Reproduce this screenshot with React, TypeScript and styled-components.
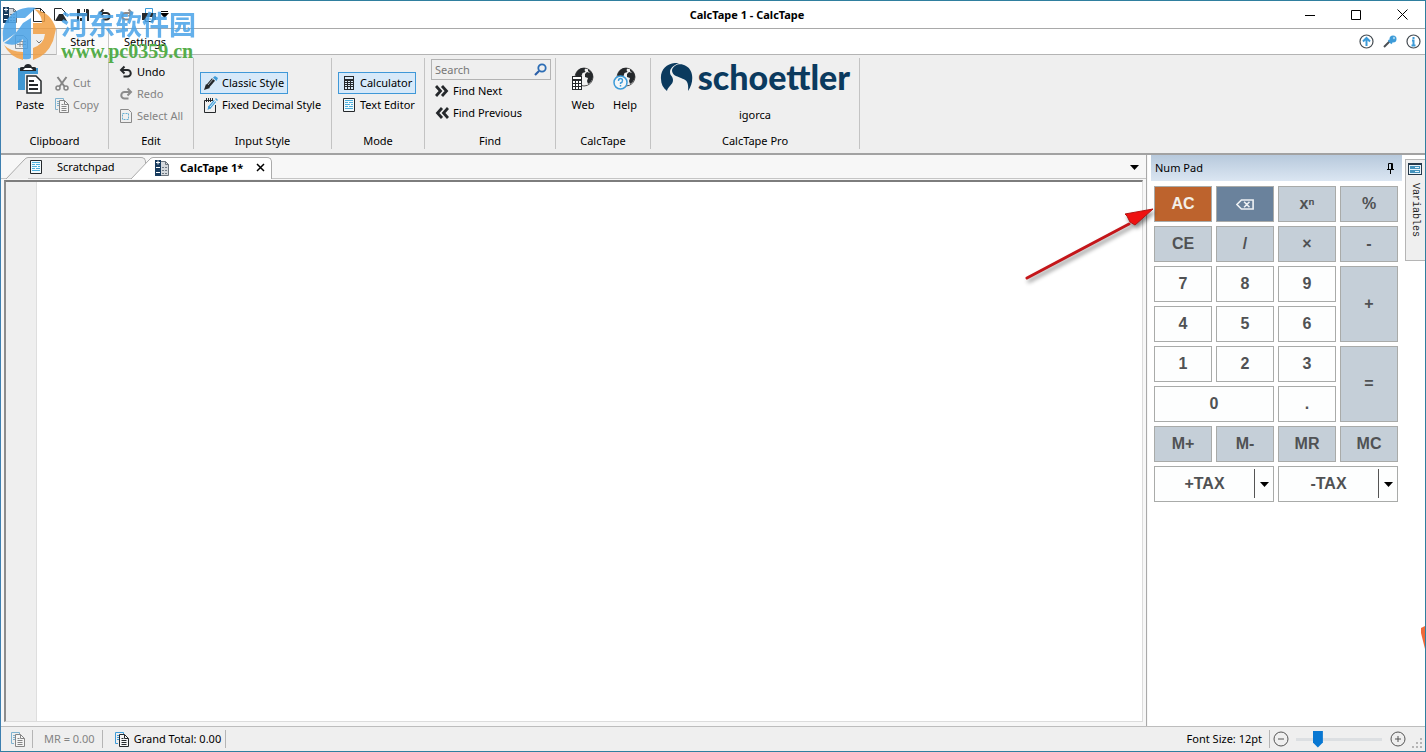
import React, { useState } from "react";
import styled, { createGlobalStyle, css } from "styled-components";

const GlobalStyle = createGlobalStyle`
  * { box-sizing: border-box; }
  body { margin: 0; background: #fff; }
  body, button, input, textarea {
    font-family: "Noto Sans", "Noto Sans CJK SC", sans-serif;
    font-size: 12px;
    line-height: 16px;
    color: #000;
  }
  button { margin: 0; padding: 0; border: 0; background: none; white-space: nowrap; }
  svg { display: block; flex: none; }
`;

const Window = styled.div`
  position: relative;
  display: flex;
  flex-direction: column;
  min-height: 100vh;
  border: 1px solid #2f7f9f;
  border-left-color: #3d7fb0;
  overflow: hidden;
`;

const TitleBar = styled.header`
  display: flex;
  align-items: center;
  justify-content: space-between;
  height: 28px;
  border-bottom: 1px solid #a9a9a9;
`;
const TitleSide = styled.div<{ $end?: boolean }>`
  flex: 1;
  display: flex;
  align-items: center;
  justify-content: ${(p) => (p.$end ? "flex-end" : "flex-start")};
`;
const Title = styled.h1`
  margin: 0;
  padding-left: 68px;
  font-size: 11px;
  line-height: 16px;
  font-weight: 700;
`;
const QuickButton = styled.button`
  display: flex;
  justify-content: center;
  width: 22px;
`;
const AppMark = styled.span`
  width: 27px;
  padding-left: 2px;
`;
const CaptionButton = styled.button`
  display: flex;
  align-items: center;
  justify-content: center;
  width: 46px;
  height: 26px;
`;

const MenuRow = styled.nav`
  display: flex;
  align-items: stretch;
  height: 26px;
  border-bottom: 1px solid #b4b4b4;
`;
const FileButton = styled.button`
  display: flex;
  align-items: center;
  justify-content: center;
  gap: 8px;
  width: 55px;
  background: #efefef;
`;
const MenuTab = styled.button<{ $active?: boolean }>`
  font-size: 11px;
  width: ${(p) => (p.$active ? 53 : 72)}px;
  ${(p) =>
    p.$active &&
    css`
      border: 1px solid #c8c8c8;
      border-width: 0 1px;
      background: #fbfbfb;
      margin-bottom: -1px;
    `}
`;
const MenuTools = styled.div`
  display: flex;
  align-items: center;
  gap: 8px;
  margin-left: auto;
  padding-right: 4px;
`;

const Ribbon = styled.section`
  display: flex;
  height: 100px;
  padding: 3px 0 4px;
  background: #efefef;
  border-bottom: 2px solid #a2a2a2;
`;
const Group = styled.section<{ $w: number }>`
  display: flex;
  flex-direction: column;
  width: ${(p) => p.$w}px;
  border-right: 1px solid #c3c3c3;
`;
const GroupBody = styled.div<{ $pad?: number }>`
  flex: 1;
  display: flex;
  padding: 0 ${(p) => p.$pad ?? 6}px;
`;
const GroupLabel = styled.h2`
  margin: 0;
  font-size: 11px;
  line-height: 16px;
  font-weight: 400;
  text-align: center;
`;
const Stack = styled.div<{ $top: number }>`
  display: flex;
  flex-direction: column;
  align-items: flex-start;
  padding-top: ${(p) => p.$top}px;
`;
const Tool = styled.button<{ $muted?: boolean; $on?: boolean }>`
  display: flex;
  align-items: center;
  gap: 4px;
  height: 22px;
  padding: 0 3px;
  border: 1px solid ${(p) => (p.$on ? "#3f98d8" : "transparent")};
  background: ${(p) => (p.$on ? "#d7e9f9" : "none")};
  color: ${(p) => (p.$muted ? "#838383" : "#000")};
  font-size: 11px;
  > svg { min-width: 14px; }
`;
const BigToolButton = styled.button`
  flex: none;
  display: flex;
  flex-direction: column;
  align-items: center;
  gap: 2px;
  width: 42px;
  padding-top: 5px;
  font-size: 11px;
`;
const BigIcon = styled.span`
  display: flex;
  align-items: center;
  height: 32px;
`;
const SearchBox = styled.label`
  display: flex;
  align-items: center;
  width: 120px;
  height: 21px;
  padding: 0 3px;
  border: 1px solid #b3b3b3;
`;
const SearchInput = styled.input`
  flex: 1;
  min-width: 0;
  padding: 0;
  border: 0;
  outline: 0;
  background: none;
  font-size: 11px;
  &::placeholder { color: #777; opacity: 1; }
`;
const Brand = styled.div`
  flex: 1;
  display: flex;
  flex-direction: column;
  align-items: center;
  gap: 11px;
  font-size: 11px;
`;
const Logo = styled.div`
  display: flex;
  align-items: center;
  gap: 5px;
  height: 38px;
  color: #0b3a5e;
  font: 900 34px/38px Lato, sans-serif;
`;

const Main = styled.main`
  flex: 1;
  display: flex;
  background: #f7f7f7;
`;
const Documents = styled.section`
  flex: 1;
  min-width: 0;
  display: flex;
  flex-direction: column;
  border-right: 1px solid #a9a9a9;
`;
const TabStrip = styled.div`
  display: flex;
  align-items: flex-end;
  height: 24px;
  padding-left: 5px;
  border-bottom: 1px solid #c5c5c5;
`;
const DocTab = styled.div<{ $active?: boolean }>`
  display: flex;
  height: 21px;
  ${(p) =>
    p.$active
      ? css`
          height: 22px;
          margin: 0 0 -1px -15px;
          z-index: 1;
        `
      : ""}
`;
const DocTabBody = styled.div<{ $active?: boolean }>`
  display: flex;
  align-items: center;
  width: ${(p) => (p.$active ? 119 : 118)}px;
  padding: 0 0 2px 2px;
  border: 1px solid #ababab;
  border-width: 1px 1px 0 0;
  border-radius: 0 5px 0 0;
  background: ${(p) => (p.$active ? "#fff" : "#efefef")};
`;
const DocTabLabel = styled.button<{ $active?: boolean }>`
  display: flex;
  align-items: center;
  gap: ${(p) => (p.$active ? 11 : 15)}px;
  font-size: 11px;
  font-weight: ${(p) => (p.$active ? 700 : 400)};
`;
const CloseTab = styled.button`
  margin-left: auto;
  margin-right: 6px;
`;
const TabMenu = styled.button`
  margin: 0 7px 7px auto;
`;
const Sheet = styled.div`
  flex: 1;
  display: flex;
  margin: 1px 3px 4px;
  border: 1px solid #dcdcdc;
  border-top: 2px solid #7d7d7d;
  border-left: 2px solid #8d8d8d;
  background: #fff;
`;
const Gutter = styled.div`
  width: 31px;
  background: #efefef;
  border-right: 1px solid #dedede;
`;
const Tape = styled.textarea`
  flex: 1;
  border: 0;
  outline: 0;
  resize: none;
  background: #fff;
`;

const Side = styled.aside`
  display: flex;
  margin-left: 1px;
  background: #fff;
`;
const NumPad = styled.section`
  width: 257px;
  padding: 0 3px;
`;
const PadHeader = styled.header`
  display: flex;
  align-items: center;
  justify-content: space-between;
  height: 26px;
  padding: 0 7px 0 4px;
  background: linear-gradient(#b7c9dc, #dbe6f2);
`;
const PadTitle = styled.h2`
  margin: 0;
  font-size: 11px;
  font-weight: 400;
`;
const Keys = styled.div`
  display: grid;
  grid-template-columns: repeat(4, 58px);
  grid-auto-rows: 36px;
  gap: 4px;
  padding: 5px 3px;
`;
type Tone = "light" | "grey" | "orange" | "blue";
const tones: Record<Tone, string> = {
  light: "#fdfefe",
  grey: "#c5cfd8",
  orange: "#bd632d",
  blue: "#6a829c",
};
const Key = styled.button<{ $tone: Tone; $cols?: number; $rows?: number }>`
  display: flex;
  align-items: center;
  justify-content: center;
  grid-column: span ${(p) => p.$cols ?? 1};
  grid-row: span ${(p) => p.$rows ?? 1};
  border: 1px solid #a9aba9;
  background: ${(p) => tones[p.$tone]};
  color: ${(p) => (p.$tone === "orange" || p.$tone === "blue" ? "#f3efe9" : "#505254")};
  font: 700 16px/20px "Liberation Sans", Arial, sans-serif;
`;
const SplitKey = styled.div`
  display: flex;
  grid-column: span 2;
  border: 1px solid #a9aba9;
  background: #fdfefe;
`;
const SplitMain = styled.button`
  flex: 1;
  color: #505254;
  font: 700 16px/20px "Liberation Sans", Arial, sans-serif;
`;
const SplitArrow = styled.button`
  display: flex;
  align-items: center;
  justify-content: center;
  width: 19px;
  margin: 2px 0 3px;
  border-left: 1px solid #555;
`;
const SideTab = styled.button`
  align-self: flex-start;
  display: flex;
  flex-direction: column;
  align-items: center;
  gap: 8px;
  width: 20px;
  height: 102px;
  margin-top: 4px;
  padding: 3px 2px 0 0;
  border: 1px solid #b5b5b5;
  border-right: 0;
  background: #efefef;
`;
const SideTabText = styled.span`
  writing-mode: vertical-rl;
  font: 10px/12px "Liberation Mono", monospace;
  color: #222;
`;

const StatusBar = styled.footer`
  display: flex;
  align-items: center;
  height: 25px;
  padding: 0 3px 0 10px;
  border-top: 1px solid #bdbdbd;
  background: #efefef;
  font-size: 11px;
`;
const StatusItem = styled.span<{ $muted?: boolean; $left?: number; $right?: number }>`
  display: flex;
  align-items: center;
  gap: 5px;
  height: 18px;
  padding: 0 ${(p) => p.$right ?? 7}px 0 ${(p) => p.$left ?? 0}px;
  border-right: 1px solid #b5b5b5;
  color: ${(p) => (p.$muted ? "#838383" : "#000")};
`;
const FontTools = styled.div`
  display: flex;
  align-items: center;
  gap: 3px;
  margin-left: auto;
`;
const Range = styled.input`
  appearance: none;
  width: 86px;
  height: 18px;
  margin: 0 5px 0 4px;
  background: linear-gradient(#dcdfe2, #dcdfe2) center / 100% 3px no-repeat;
  &::-webkit-slider-thumb {
    appearance: none;
    width: 10px;
    height: 17px;
    border: 0;
    background: #0877d2;
    clip-path: polygon(0 0, 100% 0, 100% 70%, 50% 100%, 0 70%);
  }
`;
const Grip = styled.svg`
  align-self: flex-end;
  margin-left: 3px;
`;

const Watermark = styled.div`
  position: absolute;
  top: 2px;
  left: 0;
  display: flex;
  gap: 3px;
  pointer-events: none;
`;
const MarkText = styled.div`
  padding-top: 4px;
  font: 700 27px/34px "Noto Sans CJK SC", sans-serif;
  color: #4aa3e8;
  opacity: 0.85;
`;
const MarkUrl = styled.div`
  font: 700 20px/20px "Liberation Serif", serif;
  color: #55ad4b;
`;
const Pointer = styled.svg`
  position: absolute;
  top: 200px;
  right: 272px;
  filter: drop-shadow(2px 3px 2px #0007);
`;
const EdgeBadge = styled.svg`
  position: absolute;
  top: 624px;
  right: 0;
`;

const ink = "#25282b";
const blue = "#3d9bd8";

const PageIcon = () => (
  <svg width="14" height="16" viewBox="0 0 14 16" fill="#fff" stroke={ink}>
    <path d="M1.5 1.5h7l4 4v9h-11zM8.5 1.5v4h4" />
  </svg>
);
const OpenIcon = () => (
  <svg width="16" height="16" viewBox="0 0 16 16">
    <path d="M1.500 13.500v-12h7l4 4v3" fill="none" stroke={ink} />
    <path d="M2 14 6 7h4l4 7z" fill={ink} />
  </svg>
);
const SaveIcon = () => (
  <svg width="14" height="14" viewBox="0 0 14 14">
    <path d="M1 1h11l1 1v11H1z" fill={ink} />
    <path d="M4 1h6v4H4zM3 8h8v5H3z" fill="#fff" />
    <path d="M8 1h1v3H8zM4 10h2v3H4z" fill={ink} />
  </svg>
);
const TurnIcon = ({ flip, muted }: { flip?: boolean; muted?: boolean }) => (
  <svg width="14" height="14" viewBox="0 0 14 14">
    <path
      d="M5.500 1.500 2 5l3.500 3.500M2 5h6.500a3.200 3.200 0 0 1 0 6.500H4.500"
      transform={flip ? "translate(14 0) scale(-1 1)" : undefined}
      fill="none"
      stroke={muted ? "#8c8c8c" : ink}
      strokeWidth="2"
    />
  </svg>
);
const PrintIcon = () => (
  <svg width="16" height="16" viewBox="0 0 16 16">
    <path d="M4.500 6V1.500h7V6" fill="#fff" stroke={blue} />
    <path d="M1 6h14v7H1z" fill={ink} />
    <path d="M4.500 9.500h7v5h-7z" fill="#fff" stroke={ink} />
    <path d="M6 12h4" stroke={blue} />
  </svg>
);
const Caret = ({ bar }: { bar?: boolean }) => (
  <svg width="9" height="8" viewBox="0 0 9 8">
    {bar && <path d="M1 0h7v1H1z" />}
    <path d="M0 2h9L4.500 7z" />
  </svg>
);
const TapeIcon = () => (
  <svg width="14" height="16" viewBox="0 0 14 16">
    <path d="M5.500 1.500h5l3 3v11h-8z" fill="#d5d9dd" stroke="#6b747d" />
    <path d="M10.500 1.500v3h3" fill="none" stroke="#6b747d" />
    <path d="M7 7.500h5M7 10.500h5M7 13.500h5" stroke="#707a84" strokeDasharray="2 1" />
    <path d="M0 0h6v16H0z" fill="#173b5e" />
    <path d="M1 2.500h4M3 .5v4M1 7.500h4M1 12.500h4" stroke="#fff" />
  </svg>
);
const TableIcon = () => (
  <svg width="13" height="14" viewBox="0 0 13 14" fill="none" stroke="#8b9298">
    <path d="M.5.5h8l4 4v9H.5zM2 6.500h9M2 9.500h9M5 4v8M8 6v6" />
  </svg>
);
const ClipboardIcon = () => (
  <svg width="26" height="32" viewBox="0 0 26 32">
    <path d="M1 5h20v22H1z" fill="#4298d2" />
    <path d="M3 8V5q0-1 2-1h2q1-3 4-3t4 3h2q2 0 2 1v3z" fill={ink} />
    <path d="M8 5h6l2 2H6z" fill="#fff" />
    <path d="M8 11h17v20H8z" fill="#efefef" />
    <path d="M10 13h9l5 5v12H10z" fill="#fff" stroke={ink} strokeWidth="1.500" />
    <path d="M12 18h5M12 22h9M12 26h9" stroke={ink} strokeWidth="2" />
  </svg>
);
const CutIcon = () => (
  <svg width="14" height="15" viewBox="0 0 14 15" fill="none" stroke="#858585" strokeWidth="1.500">
    <path d="M2.500 1 9.500 10.500M11.500 1l-7 9.500" strokeWidth="2" />
    <circle cx="3" cy="12" r="2" />
    <circle cx="11" cy="12" r="2" />
  </svg>
);
const CopyIcon = ({ muted }: { muted?: boolean }) => (
  <svg width="14" height="15" viewBox="0 0 14 15" fill="none" stroke={muted ? "#858585" : ink}>
    <path d="M3 11.500H.5V.5h8V2M2 3.500h2M2 5.500h2M2 7.500h2" stroke={muted ? "#7fb2cf" : blue} />
    <path d="M4.500 2.500h5l4 4v8h-9z" fill="#f5f5f5" />
    <path d="M9.500 2.500v4h4M6.500 6.500h2M6.500 8.500h5M6.500 10.500h5M6.500 12.500h5" />
  </svg>
);
const SelectIcon = () => (
  <svg width="12" height="14" viewBox="0 0 12 14" fill="none">
    <path d="M.5.5h8l3 3v10H.5z" stroke="#8a8a8a" />
    <path d="M2.500 4.500h6v6h-6z" stroke="#65aed2" strokeDasharray="2 1" />
  </svg>
);
const PencilIcon = () => (
  <svg width="14" height="14" viewBox="0 0 14 14">
    <path d="m3.500 10.500 6-7" stroke={ink} strokeWidth="4" />
    <path d="m0 14 2-6 4 4z" fill={ink} />
    <path d="m4 9 5-6" stroke="#a8b0b6" />
    <path d="m9 1.500 2-1.500 3 2-1.500 3z" fill={blue} />
  </svg>
);
const NoteIcon = () => (
  <svg width="14" height="15" viewBox="0 0 14 15" fill="none">
    <path d="M9 2.500H.5v12h11V7" stroke={ink} />
    <path d="M2.500 0v4M4.500 0v4M6.500 0v4M8.500 0v3" stroke={ink} />
    <path d="m5 10 6-7" stroke={blue} strokeWidth="3" />
    <path d="m3.500 12 1-4 2.500 2zM11 1l1-1 2 2-1 1z" fill={blue} />
    <path d="m6 9 5-6" stroke="#d9edf8" />
  </svg>
);
const CalcIcon = () => (
  <svg width="12" height="14" viewBox="0 0 12 14">
    <path d="M1 0h10v14H1z" fill={ink} />
    <path
      d="M2 1h8v2H2zM2 5h2v1H2zM5 5h2v1H5zM8 5h2v1H8zM2 7h2v1H2zM5 7h2v1H5zM8 7h2v1H8zM2 9h2v1H2zM5 9h2v1H5zM8 9h2v1H8zM2 11h2v2H2zM5 11h2v2H5zM8 11h2v2H8z"
      fill="#dcebf8"
    />
  </svg>
);
const TextIcon = () => (
  <svg width="12" height="14" viewBox="0 0 12 14">
    <path d="M.5.5h11v13H.5z" fill="#f2fafd" stroke={ink} />
    <path d="M2 2.500h8M2 4.500h3m1 0h4M2 6.500h5m1 0h2M2 8.500h3m1 0h4M2 10.500h8" stroke="#4fb0dc" />
  </svg>
);
const SearchIcon = () => (
  <svg width="13" height="13" viewBox="0 0 13 13" fill="none">
    <circle cx="8" cy="5" r="3.700" stroke="#2c6db5" strokeWidth="1.800" />
    <path d="M5 8 1 12" stroke="#2c5fa8" strokeWidth="2.200" />
  </svg>
);
const ChevronsIcon = ({ flip }: { flip?: boolean }) => (
  <svg width="14" height="12" viewBox="0 0 14 12">
    <path
      d="m1 1 4.500 5L1 11M7 1l4.500 5L7 11"
      transform={flip ? "translate(14 0) scale(-1 1)" : undefined}
      fill="none"
      stroke={ink}
      strokeWidth="2.800"
    />
  </svg>
);
const GlobeIcon = ({ help }: { help?: boolean }) => (
  <svg width="24" height="24" viewBox="0 0 24 24">
    <circle cx="13" cy="10" r="9" fill="#f1f1f1" stroke="#555" />
    <path d="M4.500 8q1-5 6-7l4 0-1 2 1 2-3 1-1 3-2 1-1 3-2-2z" fill={ink} />
    <path d="M17 2q5 3 5 8-1 5-5 7l-1-3 1-3-3-1 0-3 2-2 3 1-2-2z" fill={ink} />
    {help ? (
      <g>
        <circle cx="7.500" cy="15.500" r="6.500" fill="#f3f6f8" stroke={blue} strokeWidth="1.500" />
        <path d="M5.500 14q0-2.500 2-2.500t2 2-2 2.500v1M7.500 18v1.500" fill="none" stroke={blue} strokeWidth="1.400" />
      </g>
    ) : (
      <g>
        <path d="M1 9h10v14H1z" fill={ink} />
        <path
          d="M2 10h8v2H2zM2 14h2v2H2zM5 14h2v2H5zM8 14h2v2H8zM2 17h2v2H2zM5 17h2v2H5zM8 17h2v2H8zM2 20h2v2H2zM5 20h2v2H5zM8 20h2v2H8z"
          fill="#fff"
        />
      </g>
    )}
  </svg>
);
const SchoettlerMark = () => (
  <svg width="33" height="29" viewBox="0 0 33 29" fill="#0b3a5e">
    <path d="M19 0C8-1 0 6 1 16c0 5 2 9 6 12 1-5 6-6 6-11 0-4-3-4-3-8 0-4 4-7 9-9z" />
    <path d="M12 7c2-6 9-7 14-4 8 4 8 17 2 25 1-10-2-11-7-13-5-2-9-3-9-8z" />
  </svg>
);
const PinIcon = () => (
  <svg width="9" height="11" viewBox="0 0 9 11" fill="none" stroke="#000">
    <path d="M2.500 6V.5h4V6M1 6.500h7M4.500 7v4M5.500 1v5" />
  </svg>
);
const BackspaceIcon = () => (
  <svg width="18" height="11" viewBox="0 0 20 12" fill="none" stroke="#eef1f4" strokeWidth="1.800">
    <path d="M6 1h13v10H6L1 6zM9 3l6 6M15 3 9 9" />
  </svg>
);
const PanelIcon = () => (
  <svg width="14" height="12" viewBox="0 0 14 12">
    <path d="M0 0h14v12H0z" fill="#26394a" />
    <path d="M1 2h12v9H1z" fill="#e8f4fb" />
    <path d="M2 4.500h10M2 8.500h10" stroke="#4593bd" strokeWidth="3" />
    <path d="M7 4.500h4M7 8.500h4" stroke="#e8f4fb" />
  </svg>
);
const RoundIcon = ({ kind }: { kind: "up" | "info" }) => (
  <svg width="15" height="15" viewBox="0 0 15 15" fill="none">
    <circle cx="7.500" cy="7.500" r="6.500" stroke="#454c52" strokeWidth="1.200" />
    <path
      d={kind === "up" ? "M7.500 12V4M4 7.500 7.500 4 11 7.500" : "M7.500 3v2M6 6.500h1.500V11M5.500 11.500h4"}
      stroke={blue}
      strokeWidth="2"
    />
  </svg>
);
const BigPinIcon = () => (
  <svg width="16" height="15" viewBox="0 0 16 15">
    <path d="m2 13 6-6" stroke="#4a4f54" strokeWidth="2" />
    <path d="M6.500 6l3.500 3.500" stroke={blue} strokeWidth="2" />
    <circle cx="11" cy="5" r="3.500" fill={blue} />
    <circle cx="12" cy="4" r="1.200" fill="#9ed0ee" />
  </svg>
);
const SignIcon = ({ plus }: { plus?: boolean }) => (
  <svg width="16" height="16" viewBox="0 0 16 16" fill="none" stroke="#555">
    <circle cx="8" cy="8" r="7" />
    <path d={plus ? "M5 8h6M8 5v6" : "M5 8h6"} />
  </svg>
);
const TabSlope = ({ fill }: { fill: string }) => (
  <svg width="22" height="22" viewBox="0 0 22 22">
    <path d="M0 22 18 3q2-2.500 4-2.500V22z" fill={fill} />
    <path d="M0 22 18 3q2-2.500 4-2.500" fill="none" stroke="#ababab" />
  </svg>
);

const BigTool = ({ icon, children }: { icon: React.ReactNode; children: React.ReactNode }) => (
  <BigToolButton>
    <BigIcon>{icon}</BigIcon>
    {children}
  </BigToolButton>
);

const keys: { label: string; name?: string; tone?: Tone; cols?: number; rows?: number }[] = [
  { label: "AC", tone: "orange" },
  { label: "", name: "Backspace", tone: "blue" },
  { label: "xⁿ", tone: "grey" },
  { label: "%", tone: "grey" },
  { label: "CE", tone: "grey" },
  { label: "/", tone: "grey" },
  { label: "×", tone: "grey" },
  { label: "-", tone: "grey" },
  { label: "7" },
  { label: "8" },
  { label: "9" },
  { label: "+", tone: "grey", rows: 2 },
  { label: "4" },
  { label: "5" },
  { label: "6" },
  { label: "1" },
  { label: "2" },
  { label: "3" },
  { label: "=", tone: "grey", rows: 2 },
  { label: "0", cols: 2 },
  { label: "." },
  { label: "M+", tone: "grey" },
  { label: "M-", tone: "grey" },
  { label: "MR", tone: "grey" },
  { label: "MC", tone: "grey" },
];

export default function App() {
  const [size, setSize] = useState(12);
  return (
    <>
      <GlobalStyle />
      <Window>
        <TitleBar>
          <TitleSide>
            <AppMark><TapeIcon /></AppMark>
            <QuickButton aria-label="New"><PageIcon /></QuickButton>
            <QuickButton aria-label="Open"><OpenIcon /></QuickButton>
            <QuickButton aria-label="Save"><SaveIcon /></QuickButton>
            <QuickButton aria-label="Undo last"><TurnIcon /></QuickButton>
            <QuickButton aria-label="Redo last"><TurnIcon flip muted /></QuickButton>
            <QuickButton aria-label="Print"><PrintIcon /></QuickButton>
            <button aria-label="Customize toolbar"><Caret bar /></button>
          </TitleSide>
          <Title>CalcTape 1 - CalcTape</Title>
          <TitleSide $end>
            <CaptionButton aria-label="Minimize">
              <svg width="10" height="10"><path d="M0 5.500h10" stroke="#000" /></svg>
            </CaptionButton>
            <CaptionButton aria-label="Maximize">
              <svg width="10" height="10"><path d="M.5.5h9v9h-9z" fill="none" stroke="#000" /></svg>
            </CaptionButton>
            <CaptionButton aria-label="Close">
              <svg width="11" height="11"><path d="m.5.5 10 10m0-10-10 10" stroke="#000" /></svg>
            </CaptionButton>
          </TitleSide>
        </TitleBar>

        <MenuRow>
          <FileButton aria-label="File">
            <TableIcon />
            <svg width="6" height="4"><path d="m.5.5 2.500 2.500L5.500.5" fill="none" stroke="#777" /></svg>
          </FileButton>
          <MenuTab $active>Start</MenuTab>
          <MenuTab>Settings</MenuTab>
          <MenuTools>
            <button aria-label="Collapse ribbon"><RoundIcon kind="up" /></button>
            <button aria-label="Pin window"><BigPinIcon /></button>
            <button aria-label="About"><RoundIcon kind="info" /></button>
          </MenuTools>
        </MenuRow>

        <Ribbon>
          <Group $w={108}>
            <GroupBody $pad={8}>
              <BigTool icon={<ClipboardIcon />}>Paste</BigTool>
              <Stack $top={14}>
                <Tool $muted><CutIcon />Cut</Tool>
                <Tool $muted><CopyIcon muted />Copy</Tool>
              </Stack>
            </GroupBody>
            <GroupLabel>Clipboard</GroupLabel>
          </Group>
          <Group $w={85}>
            <GroupBody>
              <Stack $top={3}>
                <Tool><TurnIcon />Undo</Tool>
                <Tool $muted><TurnIcon flip muted />Redo</Tool>
                <Tool $muted><SelectIcon />Select All</Tool>
              </Stack>
            </GroupBody>
            <GroupLabel>Edit</GroupLabel>
          </Group>
          <Group $w={138}>
            <GroupBody>
              <Stack $top={14}>
                <Tool $on><PencilIcon />Classic Style</Tool>
                <Tool><NoteIcon />Fixed Decimal Style</Tool>
              </Stack>
            </GroupBody>
            <GroupLabel>Input Style</GroupLabel>
          </Group>
          <Group $w={93}>
            <GroupBody>
              <Stack $top={14}>
                <Tool $on><CalcIcon />Calculator</Tool>
                <Tool><TextIcon />Text Editor</Tool>
              </Stack>
            </GroupBody>
            <GroupLabel>Mode</GroupLabel>
          </Group>
          <Group $w={131}>
            <GroupBody>
              <Stack $top={1}>
                <SearchBox>
                  <SearchInput aria-label="Search" placeholder="Search" />
                  <SearchIcon />
                </SearchBox>
                <Tool><ChevronsIcon />Find Next</Tool>
                <Tool><ChevronsIcon flip />Find Previous</Tool>
              </Stack>
            </GroupBody>
            <GroupLabel>Find</GroupLabel>
          </Group>
          <Group $w={95}>
            <GroupBody>
              <BigTool icon={<GlobeIcon />}>Web</BigTool>
              <BigTool icon={<GlobeIcon help />}>Help</BigTool>
            </GroupBody>
            <GroupLabel>CalcTape</GroupLabel>
          </Group>
          <Group $w={209}>
            <GroupBody>
              <Brand>
                <Logo><SchoettlerMark />schoettler</Logo>
                igorca
              </Brand>
            </GroupBody>
            <GroupLabel>CalcTape Pro</GroupLabel>
          </Group>
        </Ribbon>

        <Main>
          <Documents>
            <TabStrip>
              <DocTab>
                <TabSlope fill="#efefef" />
                <DocTabBody>
                  <DocTabLabel><TextIcon />Scratchpad</DocTabLabel>
                </DocTabBody>
              </DocTab>
              <DocTab $active>
                <TabSlope fill="#fff" />
                <DocTabBody $active>
                  <DocTabLabel $active><TapeIcon />CalcTape 1*</DocTabLabel>
                  <CloseTab aria-label="Close tab">
                    <svg width="9" height="9"><path d="m1 1 7 7m0-7-7 7" stroke="#000" strokeWidth="1.500" /></svg>
                  </CloseTab>
                </DocTabBody>
              </DocTab>
              <TabMenu aria-label="Open documents"><Caret /></TabMenu>
            </TabStrip>
            <Sheet>
              <Gutter />
              <Tape aria-label="Calculation tape" />
            </Sheet>
          </Documents>
          <Side>
            <NumPad>
              <PadHeader>
                <PadTitle>Num Pad</PadTitle>
                <button aria-label="Pin panel"><PinIcon /></button>
              </PadHeader>
              <Keys>
                {keys.map((k) => (
                  <Key
                    key={k.label || k.name}
                    aria-label={k.name}
                    $tone={k.tone ?? "light"}
                    $cols={k.cols}
                    $rows={k.rows}
                  >
                    {k.label || <BackspaceIcon />}
                  </Key>
                ))}
                {["+TAX", "-TAX"].map((t) => (
                  <SplitKey key={t}>
                    <SplitMain>{t}</SplitMain>
                    <SplitArrow aria-label={`${t} options`}><Caret /></SplitArrow>
                  </SplitKey>
                ))}
              </Keys>
            </NumPad>
            <SideTab>
              <PanelIcon />
              <SideTabText>Variables</SideTabText>
            </SideTab>
          </Side>
        </Main>

        <StatusBar>
          <StatusItem $muted><CopyIcon muted /></StatusItem>
          <StatusItem $muted $left={11}>MR = 0.00</StatusItem>
          <StatusItem $left={12} $right={4}><CopyIcon />Grand Total: 0.00</StatusItem>
          <FontTools>
            <StatusItem as="label" htmlFor="font-size">Font Size: {size}pt</StatusItem>
            <button aria-label="Smaller text"><SignIcon /></button>
            <Range
              id="font-size"
              type="range"
              min={4}
              max={40}
              value={size}
              onChange={(e) => setSize(Number(e.target.value))}
            />
            <button aria-label="Larger text"><SignIcon plus /></button>
            <Grip width="10" height="10" viewBox="0 0 10 10" fill="#b5b5b5">
              <path d="M8 0h2v2H8zM4 4h2v2H4zM8 4h2v2H8zM0 8h2v2H0zM4 8h2v2H4zM8 8h2v2H8z" />
            </Grip>
          </FontTools>
        </StatusBar>

        <Watermark>
          <svg width="57" height="60" viewBox="0 0 57 60">
            <g opacity="0.85">
              <path d="M2 34C0 14 18 2 35 5L24 15h-9v15l-13 9z" fill="#4aa3e8" />
              <path d="M3 40q10-6 19-20l8-5v40q-2 2-8 1V36q-7 9-19 4z" fill="#4aa3e8" />
              <path d="M33 6q17 3 22 20l-3 12q-6 15-20 19V45q11-4 12-14H32V20h9q0-8-8-14z" fill="#f2a044" />
              <path d="M3 42q6 12 19 15v-8Q10 49 3 42z" fill="#f2a044" />
            </g>
          </svg>
          <div>
            <MarkText>河东软件园</MarkText>
            <MarkUrl>www.pc0359.cn</MarkUrl>
          </div>
        </Watermark>
        <Pointer width="132" height="80" viewBox="0 0 132 80">
          <path d="M6 77 108 23" stroke="#c4161a" strokeWidth="3" strokeLinecap="round" />
          <path d="m132 8-18 16-5-3-3-6-2-2z" fill="#ee1111" stroke="#b31412" />
        </Pointer>
        <EdgeBadge width="4" height="24" viewBox="0 0 4 24">
          <path d="M0 3 4 1v23L0 8z" fill="#ef6a3a" />
        </EdgeBadge>
      </Window>
    </>
  );
}
